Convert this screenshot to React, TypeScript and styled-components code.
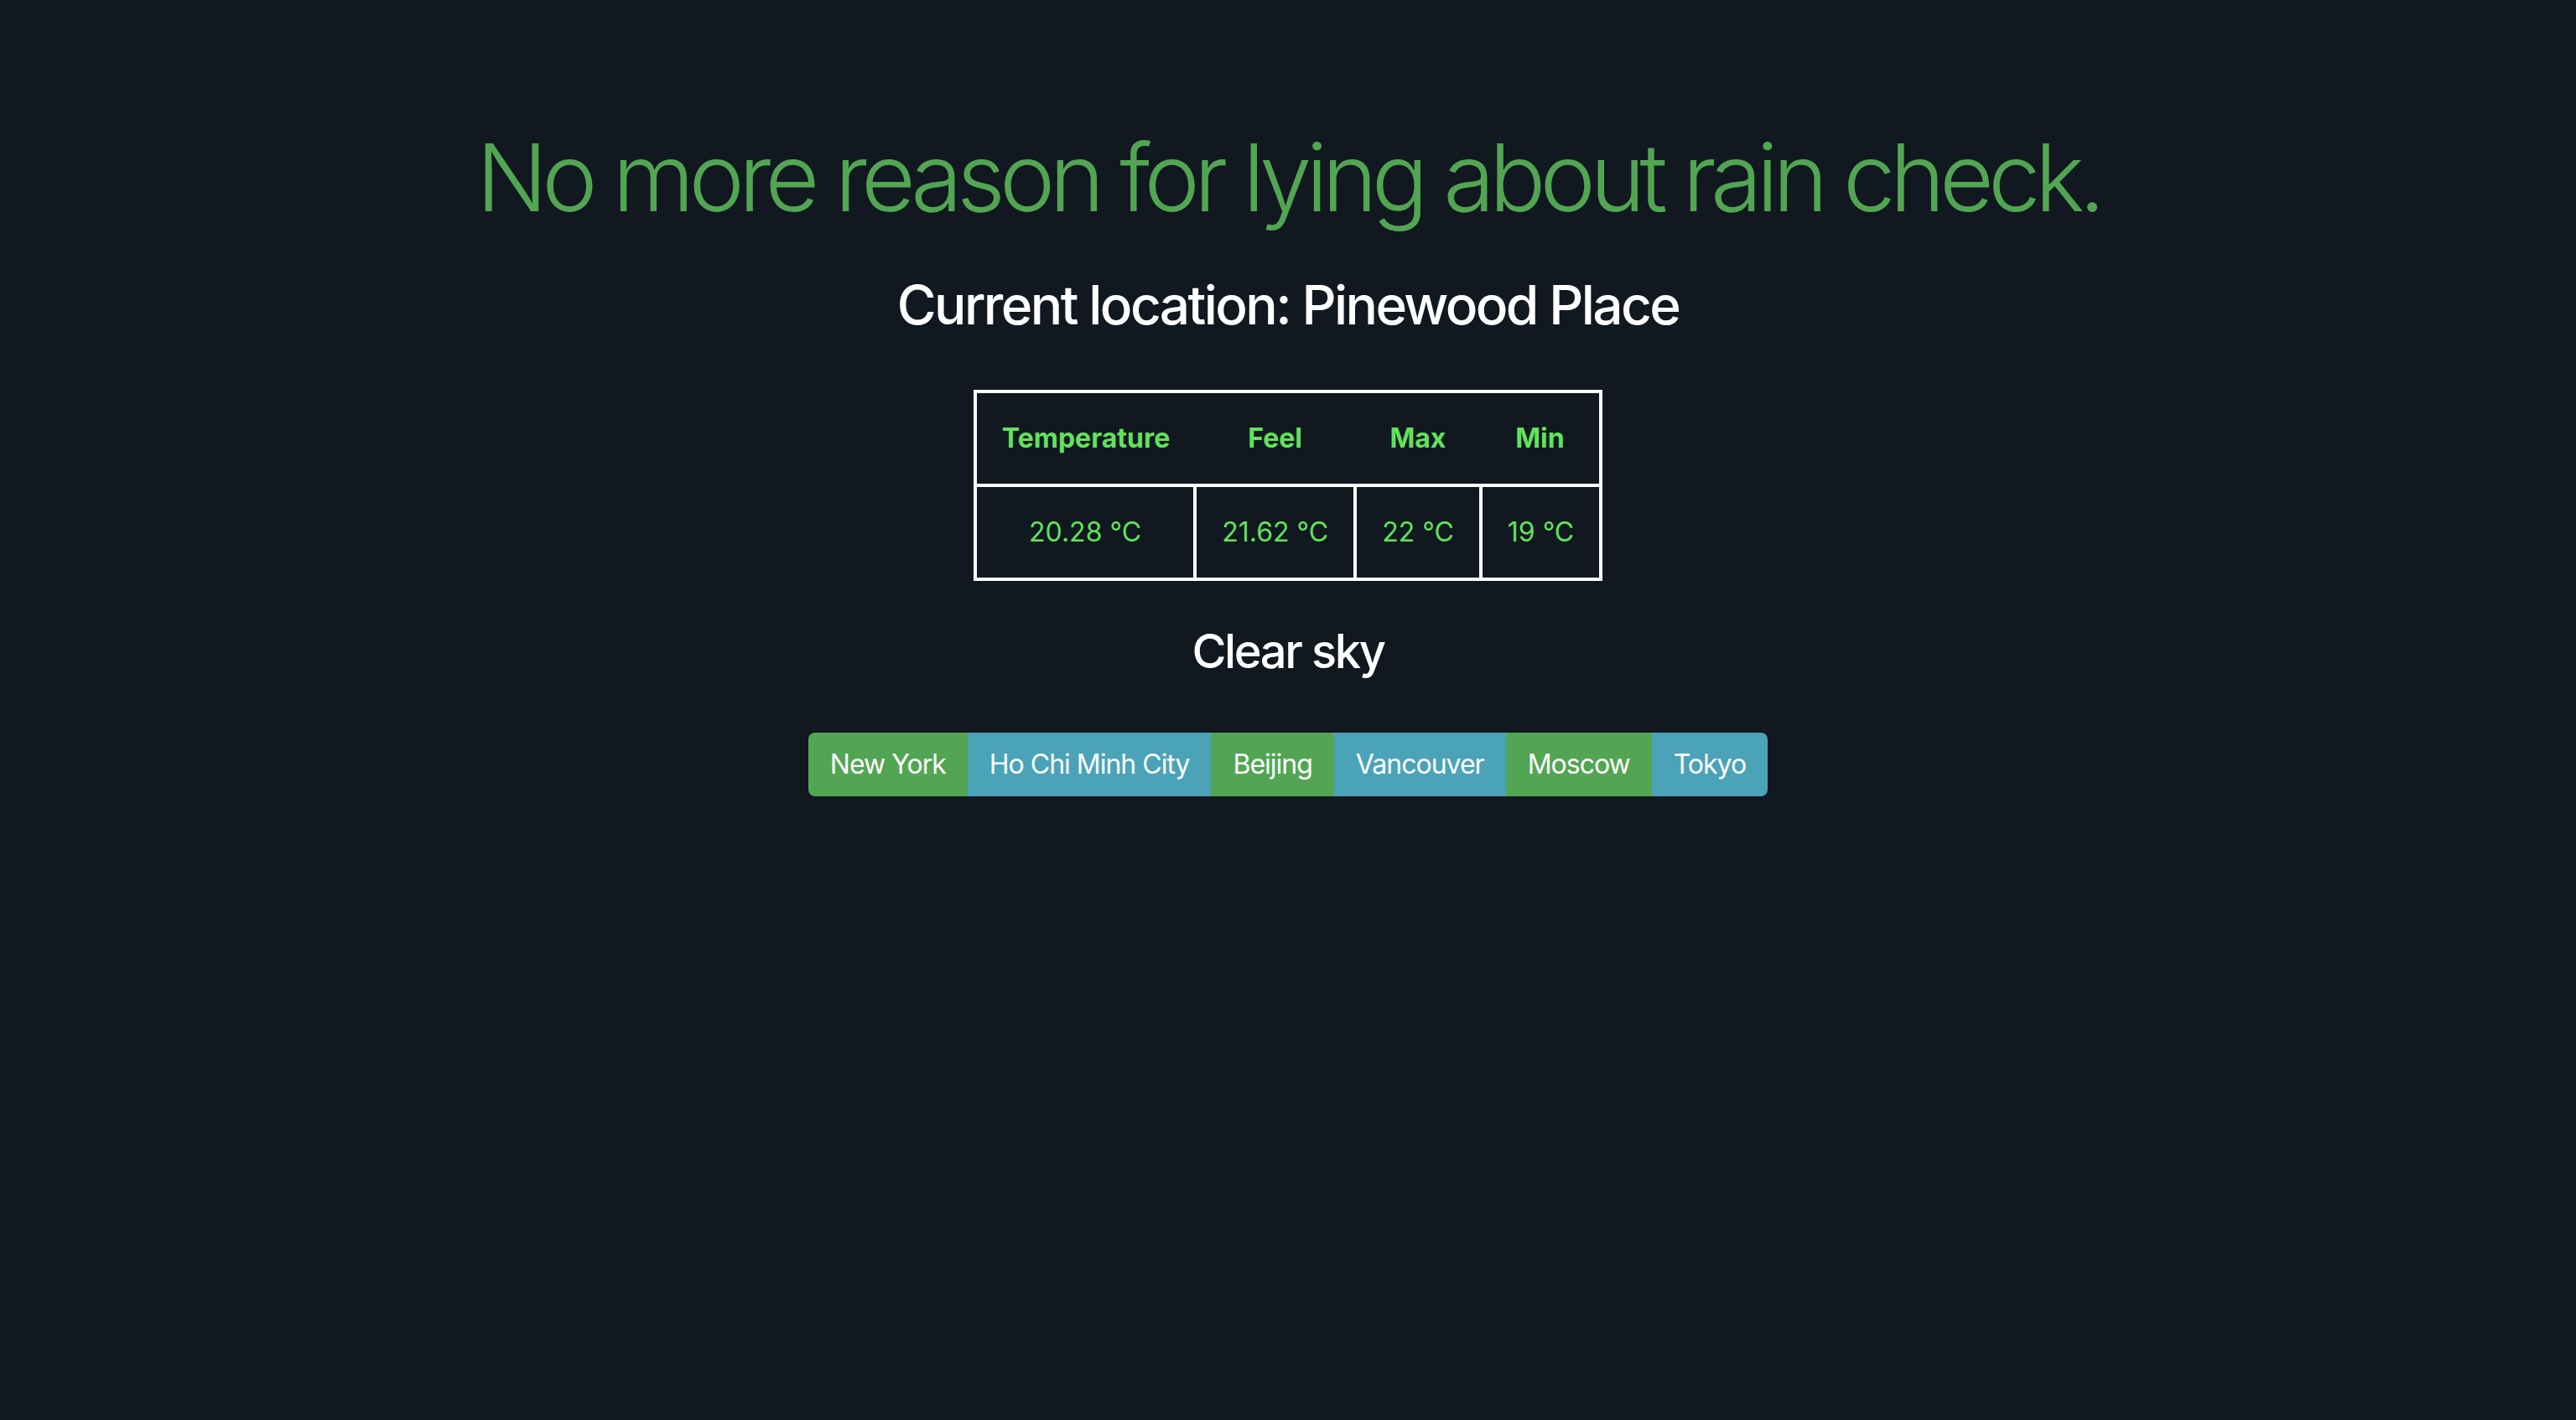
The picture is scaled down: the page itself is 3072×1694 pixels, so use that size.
import React from "react";
import styled, {createGlobalStyle} from "styled-components";

const GlobalStyle = createGlobalStyle`
  html, body {
    margin: 0;
    padding: 0;
    background-color: #111820;
  }

  body {
    font-family: "Inter", "Roboto", sans-serif;
    color: #ffffff;
  }
`;

const Page = styled.div`
  min-height: 1694px;
  display: flex;
  flex-direction: column;
  align-items: center;
  background-color: #111820;
`;

const Headline = styled.h1`
  margin: 144px 0 0;
  font-size: 112px;
  font-weight: 300;
  line-height: 1.2;
  color: #52a552;
  letter-spacing: -6.8px;
`;

const Location = styled.h2`
  margin: 48px 0 0;
  font-size: 64px;
  font-weight: 500;
  line-height: 1.2;
  color: #ffffff;
  letter-spacing: -2.6px;
`;

const WeatherTable = styled.table`
  margin-top: 62px;
  border-collapse: collapse;
  border: 4px solid #ffffff;
  font-size: 32px;
  line-height: 1.5;
  color: #62e25c;
`;

const HeadCell = styled.th`
  padding: 30px;
  font-weight: 700;
  text-align: center;
`;

const Cell = styled.td`
  padding: 30px;
  text-align: center;
  border: 4px solid #ffffff;
`;

const Summary = styled.h3`
  margin: 51px 0 0;
  font-size: 56px;
  font-weight: 500;
  line-height: 1.2;
  color: #ffffff;
  letter-spacing: -2.4px;
`;

const CityGroup = styled.div`
  margin-top: 63px;
  display: flex;
  border-radius: 8px;
  overflow: hidden;
`;

const CityButton = styled.button<{ $tone: "green" | "teal" }>`
  padding: 12px 24px;
  border: 2px solid transparent;
  background-color: ${({$tone}) => $tone === "green" ? "#52a552" : "#4aa3b7"};
  color: #ffffff;
  font-family: "Inter", "Roboto", sans-serif;
  font-size: 32px;
  line-height: 1.5;
  letter-spacing: -1px;
  cursor: pointer;
`;

const readings = [
    {label: "Temperature", value: "20.28 °C"},
    {label: "Feel", value: "21.62 °C"},
    {label: "Max", value: "22 °C"},
    {label: "Min", value: "19 °C"},
];

const cities = ["New York", "Ho Chi Minh City", "Beijing", "Vancouver", "Moscow", "Tokyo"];

const App: React.FC = () => {
    return <>
        <GlobalStyle/>
        <Page>
            <Headline>No more reason for lying about rain check.</Headline>
            <Location>Current location: Pinewood Place</Location>
            <WeatherTable>
                <thead>
                <tr>
                    {readings.map(r => <HeadCell key={r.label}>{r.label}</HeadCell>)}
                </tr>
                </thead>
                <tbody>
                <tr>
                    {readings.map(r => <Cell key={r.label}>{r.value}</Cell>)}
                </tr>
                </tbody>
            </WeatherTable>
            <Summary>Clear sky</Summary>
            <CityGroup>
                {cities.map((city, i) =>
                    <CityButton key={city} $tone={i % 2 === 0 ? "green" : "teal"}>{city}</CityButton>
                )}
            </CityGroup>
        </Page>
    </>
}

export default App;
